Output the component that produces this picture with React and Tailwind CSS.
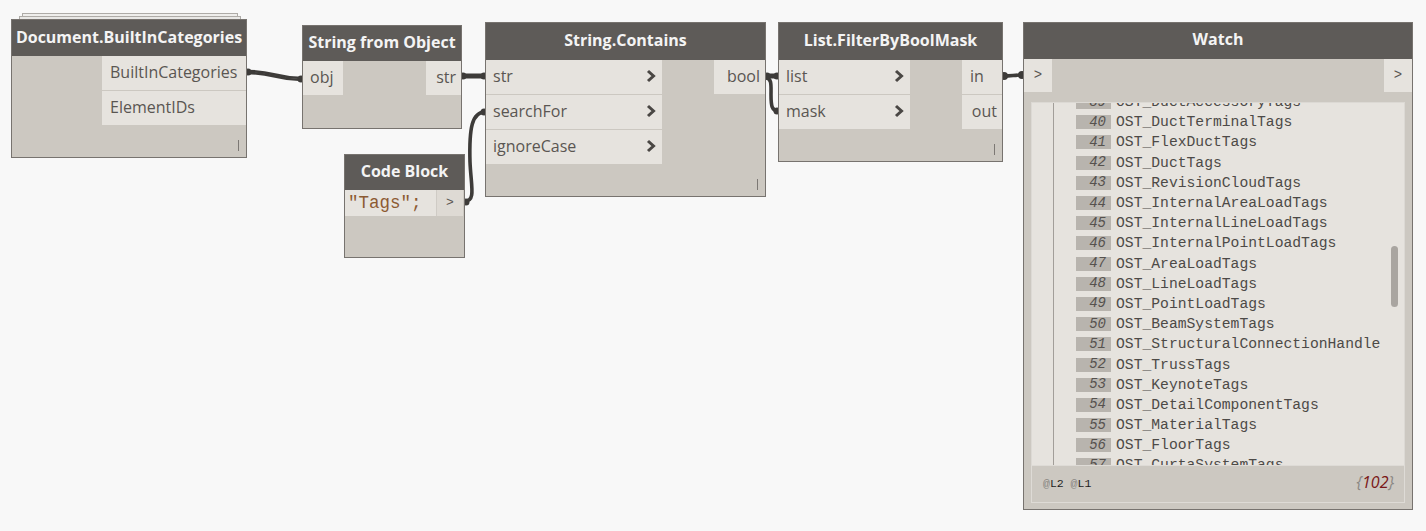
import React from "react";

const ui = "font-['Open_Sans',sans-serif]";
const mono = "font-['Liberation_Mono',monospace]";

const watchRows = [
  [39, "OST_DuctAccessoryTags"],
  [40, "OST_DuctTerminalTags"],
  [41, "OST_FlexDuctTags"],
  [42, "OST_DuctTags"],
  [43, "OST_RevisionCloudTags"],
  [44, "OST_InternalAreaLoadTags"],
  [45, "OST_InternalLineLoadTags"],
  [46, "OST_InternalPointLoadTags"],
  [47, "OST_AreaLoadTags"],
  [48, "OST_LineLoadTags"],
  [49, "OST_PointLoadTags"],
  [50, "OST_BeamSystemTags"],
  [51, "OST_StructuralConnectionHandle"],
  [52, "OST_TrussTags"],
  [53, "OST_KeynoteTags"],
  [54, "OST_DetailComponentTags"],
  [55, "OST_MaterialTags"],
  [56, "OST_FloorTags"],
  [57, "OST_CurtaSystemTags"],
];

function Chevron() {
  return (
    <svg width="10" height="14" viewBox="0 0 10 14" className="shrink-0">
      <path d="M2 2 L7.5 7 L2 12" fill="none" stroke="#4a4744" strokeWidth="3" strokeLinejoin="miter" />
    </svg>
  );
}

function Header({ title, h = "h-[36px]" }) {
  return (
    <div className={`${h} bg-[#5e5b58] flex items-center justify-center pb-[3px] text-[#f4f4f4] font-bold text-[16px] whitespace-nowrap`}>
      {title}
    </div>
  );
}

function InPort({ label, chevron = true, w }) {
  return (
    <div className={`h-[34px] ${w} bg-[#e6e3de] flex items-center justify-between pl-[7px] pr-[6px] pb-[2px] text-[16px] text-[#5a5652]`}>
      <span>{label}</span>
      {chevron && <Chevron />}
    </div>
  );
}

function OutPort({ label, w, left = false }) {
  return (
    <div
      className={`h-[34px] ${w} bg-[#e6e3de] flex items-center pb-[2px] text-[16px] text-[#5a5652] ${
        left ? "justify-start pl-[8px]" : "justify-end pr-[5px]"
      }`}
    >
      {label}
    </div>
  );
}

function Lacing() {
  return <div className="absolute right-[7px] bottom-[6px] w-[1px] h-[11px] bg-[#7c7874]" />;
}

function Wires() {
  const c = "#3d3b39";
  return (
    <svg className="absolute inset-0" width="1426" height="531">
      <g fill="none" stroke={c} strokeLinecap="round">
        <path d="M247 71 C275 71 275 78 302 78" strokeWidth="2.6" />
        <path d="M247 73 C275 73 275 80 302 80" strokeWidth="2.6" />
        <path d="M462 76 C473 76 474 76 485 76" strokeWidth="5" />
        <path d="M465 201 C476 201 471 186 470 162 C469 128 472 112 485 112" strokeWidth="3.6" />
        <path d="M766 76 C771 76 773 76 778 76" strokeWidth="5" />
        <path d="M766 78 C772 78 771 86 771 95 C771 106 772 111 778 111" strokeWidth="3.6" />
        <path d="M1003 76 C1013 76 1013 75 1023 75" strokeWidth="3.5" />
      </g>
      <g fill={c}>
        <circle cx="248" cy="72" r="3.5" />
        <circle cx="301" cy="79" r="3.5" />
        <circle cx="463" cy="76" r="3.5" />
        <circle cx="484" cy="76" r="3.5" />
        <circle cx="466" cy="202" r="3.5" />
        <circle cx="484" cy="112" r="3.5" />
        <circle cx="767" cy="76" r="3.5" />
        <circle cx="777" cy="76" r="3.5" />
        <circle cx="777" cy="111" r="3.5" />
        <circle cx="1004" cy="76" r="4" />
        <circle cx="1022" cy="75" r="4" />
      </g>
    </svg>
  );
}

export default function App() {
  return (
    <div className={`relative w-[1426px] h-[531px] bg-[#f8f8f8] overflow-hidden ${ui}`}>
      <Wires />

      {/* stacked preview edges above Document node */}
      <div className="absolute left-[22px] top-[13px] w-[216px] h-[8px] border border-[#aeaba7] bg-[#efeeec]" />
      <div className="absolute left-[19px] top-[16px] w-[222px] h-[6px] border border-[#aeaba7] bg-[#e9e8e6]" />

      {/* Document.BuiltInCategories */}
      <div className="absolute left-[11px] top-[19px] w-[236px] h-[139px] bg-[#ccc8c1] border border-[#77736f] flex flex-col">
        <Header title="Document.BuiltInCategories" h="h-[36px]" />
        <div className="flex flex-col items-end gap-[1px]">
          <OutPort label="BuiltInCategories" w="w-[144px]" left />
          <OutPort label="ElementIDs" w="w-[144px]" left />
        </div>
        <Lacing />
      </div>

      {/* String from Object */}
      <div className="absolute left-[302px] top-[25px] w-[160px] h-[104px] bg-[#ccc8c1] border border-[#77736f] flex flex-col">
        <Header title="String from Object" h="h-[35px]" />
        <div className="flex justify-between">
          <InPort label="obj" chevron={false} w="w-[40px]" />
          <OutPort label="str" w="w-[35px]" />
        </div>
      </div>

      {/* Code Block */}
      <div className="absolute left-[344px] top-[154px] w-[121px] h-[104px] bg-[#ccc8c1] border border-[#77736f] flex flex-col">
        <Header title="Code Block" h="h-[35px]" />
        <div className="flex h-[26px]">
          <div className={`w-[91px] bg-[#e6e3de] flex items-center pl-[3px] text-[17.5px] text-[#8c5a32] ${mono}`}>
            "Tags";
          </div>
          <div className={`w-[27px] bg-[#dedad4] border-l border-[#cfcbc5] flex items-center justify-center text-[13px] text-[#5a5652] ${mono}`}>
            &gt;
          </div>
        </div>
      </div>

      {/* String.Contains */}
      <div className="absolute left-[485px] top-[22px] w-[281px] h-[175px] bg-[#ccc8c1] border border-[#77736f] flex flex-col">
        <Header title="String.Contains" h="h-[37px]" />
        <div className="flex justify-between">
          <div className="flex flex-col gap-[1px]">
            <InPort label="str" w="w-[176px]" />
            <InPort label="searchFor" w="w-[176px]" />
            <InPort label="ignoreCase" w="w-[176px]" />
          </div>
          <OutPort label="bool" w="w-[51px]" />
        </div>
        <Lacing />
      </div>

      {/* List.FilterByBoolMask */}
      <div className="absolute left-[778px] top-[22px] w-[225px] h-[140px] bg-[#ccc8c1] border border-[#77736f] flex flex-col">
        <Header title="List.FilterByBoolMask" h="h-[37px]" />
        <div className="flex justify-between">
          <div className="flex flex-col gap-[1px]">
            <InPort label="list" w="w-[131px]" />
            <InPort label="mask" w="w-[131px]" />
          </div>
          <div className="flex flex-col gap-[1px]">
            <OutPort label="in" w="w-[40px]" left />
            <OutPort label="out" w="w-[40px]" />
          </div>
        </div>
        <Lacing />
      </div>

      {/* Watch */}
      <div className="absolute left-[1023px] top-[22px] w-[390px] h-[488px] bg-[#ccc8c1] border border-[#77736f] flex flex-col">
        <Header title="Watch" h="h-[36px]" />
        <div className="flex justify-between h-[34px]">
          <div className={`w-[28px] bg-[#e6e3de] flex items-center justify-center text-[14px] text-[#5a5652] ${mono}`}>&gt;</div>
          <div className={`w-[28px] bg-[#e6e3de] flex items-center justify-center text-[14px] text-[#5a5652] ${mono}`}>&gt;</div>
        </div>
        <div className="flex flex-col px-[7px] pt-[10px] pb-[6px] flex-1">
          <div className="relative h-[363px] bg-[#e6e3de] border-x border-t border-[#dcd9d4] overflow-hidden">
            <div className="absolute left-[21px] top-0 bottom-0 w-[1px] bg-[#a29e99]" />
            <div className="flex flex-col mt-[-11px]">
              {watchRows.map(([i, name]) => (
                <div key={i} className="h-[20.2px] flex items-center shrink-0">
                  <div className={`ml-[44px] w-[35px] shrink-0 h-[14px] bg-[#b8b4ae] flex items-center justify-end pr-[5px] italic text-[14px] text-[#56524e] ${mono}`}>
                    {i}
                  </div>
                  <span className={`ml-[5px] text-[14.7px] text-[#4d4a47] whitespace-nowrap ${mono}`}>{name}</span>
                </div>
              ))}
            </div>
            <div className="absolute left-[359px] top-[143px] w-[7px] h-[61px] rounded-full bg-[#a9a5a0]" />
          </div>
          <div className="h-[38px] border border-[#dedbd6] flex items-center justify-between pl-[11px] pr-[10px]">
            <span className={`text-[11.5px] ${mono}`}>
              <span className="text-[#8a8783]">@</span>
              <span className="text-[#1e1e1e]">L2</span>
              <span className="text-[#8a8783]"> @</span>
              <span className="text-[#1e1e1e]">L1</span>
            </span>
            <span className="italic text-[16px] text-[#8a8783] mb-[4px]">
              {"{"}
              <span className="text-[#7a1717]">102</span>
              {"}"}
            </span>
          </div>
        </div>
      </div>
    </div>
  );
}
